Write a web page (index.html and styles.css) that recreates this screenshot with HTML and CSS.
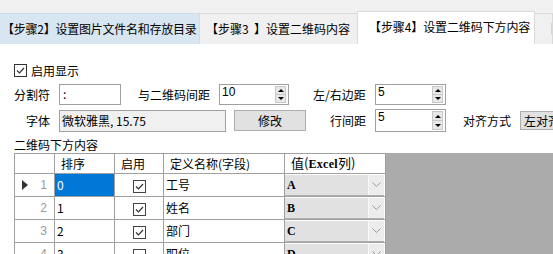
FILE: index.html
```html
<!DOCTYPE html>
<html lang="zh-CN">
<head>
<meta charset="utf-8">
<link rel="stylesheet" href="styles.css">
</head>
<body>
<div class="tabstrip">
  <div class="tab tab1">【步骤2】设置图片文件名和存放目录</div>
  <div class="tab tab2">【步骤3&nbsp;&nbsp;】设置二维码内容</div>
  <div class="tab tab3">【步骤4】设置二维码下方内容</div>
  <div class="tab tab4">【</div>
</div>
<div class="page">
  <div class="row r1">
    <span class="cb checked"><svg viewBox="0 0 11 11" width="11" height="11"><path d="M2 5.5 L4.5 8 L9 3" fill="none" stroke="#333" stroke-width="1.2"/></svg></span>
    <span class="cblabel">启用显示</span>
  </div>
  <div class="row r2">
    <span class="lbl w45">分割符</span>
    <span class="input w62">:</span>
    <span class="lbl ml17 w81">与二维码间距</span>
    <span class="spin w70"><span class="val">10</span><span class="arrows"><span class="up"></span><span class="down"></span></span></span>
    <span class="lbl ml24 w62">左/右边距</span>
    <span class="spin w71"><span class="val">5</span><span class="arrows"><span class="up"></span><span class="down"></span></span></span>
  </div>
  <div class="row r3">
    <span class="lbl w45 pl12">字体</span>
    <span class="input ro w167">微软雅黑, 15.75</span>
    <span class="btn">修改</span>
    <span class="lbl ml24 w45">行间距</span>
    <span class="spin w71 tall"><span class="val">5</span><span class="arrows"><span class="up"></span><span class="down"></span></span></span>
    <span class="lbl ml17 w57">对齐方式</span>
    <span class="combo">左对齐</span>
  </div>
  <div class="section">二维码下方内容</div>
  <div class="grid">
    <table>
      <colgroup><col class="c0"><col class="c1"><col class="c2"><col class="c3"><col class="c4"></colgroup>
      <tr class="hdr"><th></th><th>排序</th><th>启用</th><th>定义名称(字段)</th><th class="vh">值(<span class="ser">Excel</span>列)</th></tr>
      <tr><td class="rh"><span class="arrow"></span><span class="num">1</span></td><td class="sel">0</td><td class="cc"><span class="cb checked"><svg viewBox="0 0 11 11" width="11" height="11"><path d="M2 5.5 L4.5 8 L9 3" fill="none" stroke="#333" stroke-width="1.2"/></svg></span></td><td>工号</td><td class="vc"><div class="dd"><span class="ser">A</span><span class="ddb"><svg viewBox="0 0 9 5" width="9" height="5"><path d="M0.5 0.5 L4.5 4.5 L8.5 0.5" fill="none" stroke="#9a9a9a" stroke-width="1"/></svg></span></div></td></tr>
      <tr><td class="rh"><span class="num">2</span></td><td>1</td><td class="cc"><span class="cb checked"><svg viewBox="0 0 11 11" width="11" height="11"><path d="M2 5.5 L4.5 8 L9 3" fill="none" stroke="#333" stroke-width="1.2"/></svg></span></td><td>姓名</td><td class="vc"><div class="dd"><span class="ser">B</span><span class="ddb"><svg viewBox="0 0 9 5" width="9" height="5"><path d="M0.5 0.5 L4.5 4.5 L8.5 0.5" fill="none" stroke="#9a9a9a" stroke-width="1"/></svg></span></div></td></tr>
      <tr><td class="rh"><span class="num">3</span></td><td>2</td><td class="cc"><span class="cb checked"><svg viewBox="0 0 11 11" width="11" height="11"><path d="M2 5.5 L4.5 8 L9 3" fill="none" stroke="#333" stroke-width="1.2"/></svg></span></td><td>部门</td><td class="vc"><div class="dd"><span class="ser">C</span><span class="ddb"><svg viewBox="0 0 9 5" width="9" height="5"><path d="M0.5 0.5 L4.5 4.5 L8.5 0.5" fill="none" stroke="#9a9a9a" stroke-width="1"/></svg></span></div></td></tr>
      <tr><td class="rh"><span class="num">4</span></td><td>3</td><td class="cc"><span class="cb"></span></td><td>职位</td><td class="vc"><div class="dd"><span class="ser">D</span><span class="ddb"><svg viewBox="0 0 9 5" width="9" height="5"><path d="M0.5 0.5 L4.5 4.5 L8.5 0.5" fill="none" stroke="#9a9a9a" stroke-width="1"/></svg></span></div></td></tr>
    </table>
  </div>
</div>
</body>
</html>
```
FILE: styles.css
```css
* { box-sizing: border-box; }
body {
  margin: 0;
  width: 553px;
  height: 254px;
  overflow: hidden;
  background: #fff;
  color: #000;
  font-family: "Noto Sans CJK SC", "Microsoft YaHei", sans-serif;
  font-size: 12px;
  line-height: 16px;
}
.tabstrip {
  display: flex;
  align-items: flex-end;
  height: 44px;
  background: #f0f0f0;
  white-space: nowrap;
  overflow: hidden;
}
.tab {
  height: 31px;
  border: 1px solid #dadada;
  border-bottom: none;
  border-left: none;
  line-height: 29px;
  background: #f0f0f0;
  flex: none;
  overflow: hidden;
}
.tab1 { width: 200px; padding-left: 2px; background: #d8e6f2; border-color: #cddcea; letter-spacing: -0.25px; }
.tab2 { width: 158px; padding-left: 6px; }
.tab3 {
  width: 178px;
  height: 33px;
  margin-left: -1px;
  padding-left: 11px;
  line-height: 30px;
  background: #fff;
  border-left: 1px solid #dadada;
  letter-spacing: -0.1px;
}
.tab4 { flex: 1; padding-left: 9px; }

.page { padding: 20px 0 0 14px; }
.row { display: flex; align-items: center; white-space: nowrap; }
.r1 { height: 13px; }
.r2 { height: 21px; margin-top: 7px; }
.r3 { height: 23px; margin-top: 4px; }
.cb {
  display: inline-flex;
  align-items: center;
  justify-content: center;
  width: 13px;
  height: 13px;
  border: 1px solid #333;
  background: #fff;
  flex: none;
}
.cblabel { margin-left: 4px; }
.lbl { flex: none; }
.w45 { width: 45px; }
.w57 { width: 57px; }
.w62 { width: 62px; }
.w70 { width: 70px; }
.w71 { width: 71px; }
.w81 { width: 81px; }
.w167 { width: 167px; }
.ml17 { margin-left: 17px; }
.ml24 { margin-left: 24px; }
.pl12 { padding-left: 12px; }
.input {
  flex: none;
  height: 21px;
  border: 1px solid #a0a0a0;
  background: #fff;
  padding-left: 3px;
  line-height: 18px;
}
.input.ro { height: 22px; background: #f0f0f0; padding-left: 2px; line-height: 19px; }
.btn {
  flex: none;
  width: 72px;
  height: 21px;
  margin-left: 8px;
  border: 1px solid #adadad;
  background: #e1e1e1;
  text-align: center;
  line-height: 19px;
}
.spin {
  flex: none;
  display: flex;
  justify-content: space-between;
  height: 21px;
  border: 1px solid #a0a0a0;
  background: #fff;
  padding: 1px;
}
.spin.tall { height: 23px; }
.spin .val { padding-left: 1px; line-height: 13px; font-family: "Liberation Sans", sans-serif; font-size: 12px; }
.arrows {
  width: 11px;
  margin-right: 1px;
  display: flex;
  flex-direction: column;
  border: 1px solid #c8c8c8;
  background: #e8e8e8;
}
.arrows span { flex: 1; display: flex; align-items: center; justify-content: center; }
.arrows .up { border-bottom: 1px solid #c8c8c8; }
.arrows .up::before { content: ""; border: 3px solid transparent; border-bottom: 3px solid #000; border-top: none; }
.arrows .down::before { content: ""; border: 3px solid transparent; border-top: 3px solid #000; border-bottom: none; }
.combo {
  flex: none;
  width: 60px;
  height: 19px;
  border: 1px solid #adadad;
  background: #e1e1e1;
  padding-left: 3px;
  line-height: 17px;
}
.section { margin-top: 5px; height: 16px; line-height: 16px; }
.grid {
  height: 110px;
  background: #ababab;
}
table {
  border-collapse: collapse;
  table-layout: fixed;
  width: 371px;
  background: #fff;
}
.c0 { width: 40px; }
.c1 { width: 60px; }
.c2 { width: 49px; }
.c3 { width: 121px; }
.c4 { width: 101px; }
th, td {
  border: 1px solid #a0a0a0;
  padding: 0 0 0 2px;
  text-align: left;
  font-weight: normal;
  white-space: nowrap;
  overflow: hidden;
}
tr.hdr th { height: 19px; padding-left: 6px; line-height: 17px; }
tr.hdr th.vh { padding-left: 6px; font-size: 13px; }
td { height: 23px; line-height: 20px; }
.ser { font-family: "Liberation Serif", serif; font-weight: bold; font-size: 12px; }
.vh .ser { font-size: 12px; letter-spacing: 0.3px; }
td.rh { position: relative; padding: 0; text-align: right; padding-right: 7px; color: #9a9a9a; font-family: "Liberation Sans", sans-serif; }
.arrow {
  position: absolute;
  left: 7px;
  top: 6px;
  border: 5px solid transparent;
  border-left: 6px solid #333;
  border-right: none;
}
td.sel { background: #0078d7; color: #fff; }
td.cc { text-align: center; padding: 0; }
td.cc .cb { vertical-align: middle; border-color: #444; }
td.vc { padding: 0; }
.dd {
  display: flex;
  justify-content: space-between;
  height: 21px;
  margin: 0 1px 0 0;
  background: #e1e1e1;
  border-bottom: 1px solid #b0b0b0;
  padding-left: 2px;
  line-height: 21px;
}
.ddb {
  width: 16px;
  display: flex;
  align-items: center;
  justify-content: center;
  background: #ececec;
  border-left: 1px solid #fafafa;
}
```
